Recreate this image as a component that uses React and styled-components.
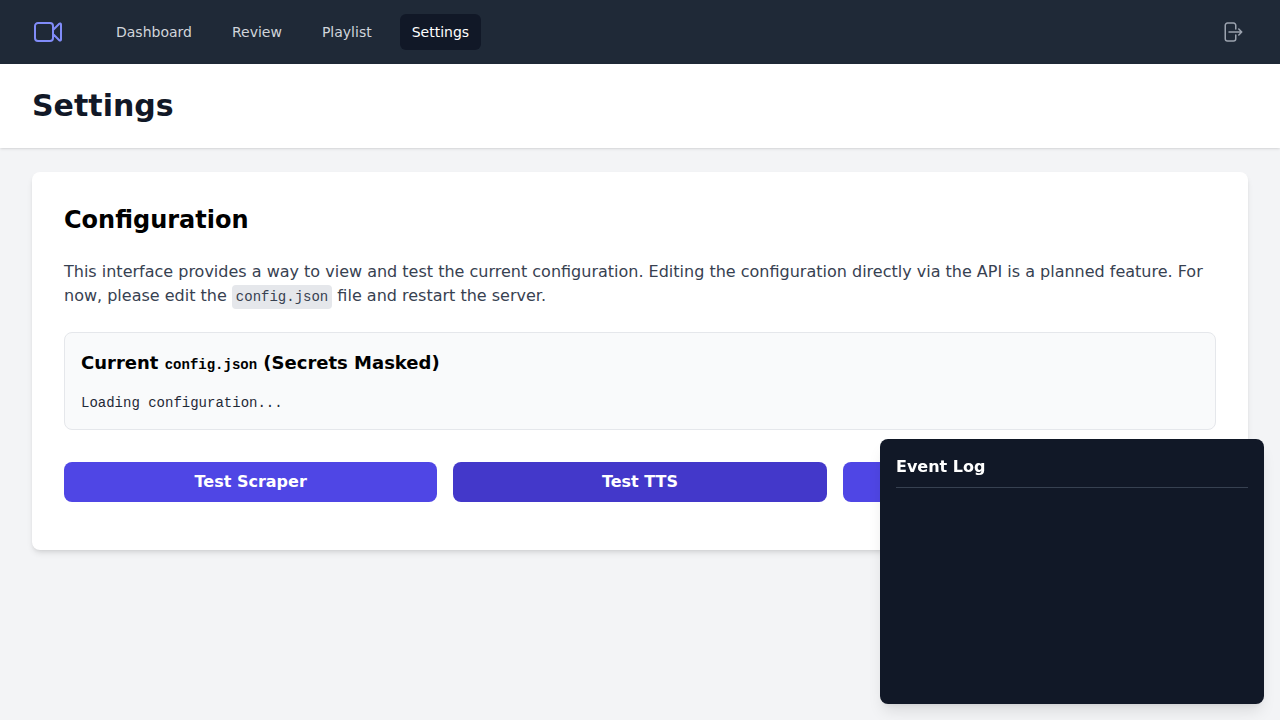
import React from "react";
import styled, { createGlobalStyle } from "styled-components";

const GlobalStyle = createGlobalStyle`
  *, *::before, *::after { box-sizing: border-box; }
  body {
    margin: 0;
    background: #f3f4f6;
    color: #000;
    font-family: "DejaVu Sans", sans-serif;
    font-size: 16px;
    line-height: 24px;
  }
  h1, h2, h3, p, pre { margin: 0; }
`;

const TopBar = styled.nav`
  display: flex;
  align-items: center;
  height: 64px;
  padding: 0 32px;
  background: #1f2937;
`;

const Logo = styled.svg`
  flex: none;
  width: 32px;
  height: 32px;
  color: #818cf8;
`;

const NavLinks = styled.div`
  display: flex;
  gap: 16px;
  margin-left: 40px;
`;

const NavLink = styled.a`
  padding: 8px 12px;
  border-radius: 6px;
  font-size: 14px;
  line-height: 20px;
  text-decoration: none;
  color: ${(p) => (p.$active ? "#fff" : "#d1d5db")};
  background: ${(p) => (p.$active ? "#111827" : "transparent")};
`;

const IconButton = styled.button`
  display: flex;
  margin-left: auto;
  padding: 4px;
  border: 0;
  border-radius: 16px;
  background: transparent;
  color: #9ca3af;
  cursor: pointer;

  svg {
    width: 24px;
    height: 24px;
  }
`;

const PageHeader = styled.header`
  padding: 24px 32px;
  background: #fff;
  box-shadow: 0 1px 3px rgba(0, 0, 0, 0.1), 0 1px 2px -1px rgba(0, 0, 0, 0.1);
`;

const PageTitle = styled.h1`
  font-size: 30px;
  line-height: 36px;
  font-weight: 700;
  color: #111827;
`;

const Main = styled.main`
  padding: 24px 32px;
`;

const Card = styled.section`
  padding: 32px 32px 48px;
  border-radius: 8px;
  background: #fff;
  box-shadow: 0 4px 6px -1px rgba(0, 0, 0, 0.1), 0 2px 4px -2px rgba(0, 0, 0, 0.1);
`;

const CardTitle = styled.h2`
  margin-bottom: 24px;
  font-size: 24px;
  line-height: 32px;
  font-weight: 700;
`;

const Description = styled.p`
  margin-bottom: 24px;
  color: #374151;
`;

const Code = styled.code`
  font-family: "Liberation Mono", monospace;
  font-size: 14px;
  line-height: 20px;
`;

const CodeTag = styled(Code)`
  padding: 4px;
  border-radius: 4px;
  background: #e5e7eb;
`;

const ConfigPanel = styled.div`
  padding: 16px;
  border: 1px solid #e5e7eb;
  border-radius: 8px;
  background: #f9fafb;
`;

const ConfigTitle = styled.h3`
  margin-bottom: 16px;
  font-size: 18px;
  line-height: 28px;
  font-weight: 600;
`;

const ConfigOutput = styled.pre`
  overflow-x: auto;
  font-family: "Liberation Mono", monospace;
  font-size: 14px;
  line-height: 20px;
  color: #1f2937;
`;

const Actions = styled.div`
  display: grid;
  grid-template-columns: repeat(3, 1fr);
  gap: 16px;
  margin-top: 32px;
`;

const ActionButton = styled.button`
  padding: 8px 16px;
  border: 0;
  border-radius: 8px;
  background: ${(p) => (p.$highlighted ? "#4338ca" : "#4f46e5")};
  color: #fff;
  font: inherit;
  font-weight: 700;
  cursor: pointer;
`;

const EventLog = styled.aside`
  position: fixed;
  right: 16px;
  bottom: 16px;
  width: 384px;
  padding: 16px;
  border-radius: 8px;
  background: #111827;
  color: #fff;
  box-shadow: 0 10px 15px -3px rgba(0, 0, 0, 0.1), 0 4px 6px -4px rgba(0, 0, 0, 0.1);
`;

const EventLogTitle = styled.h3`
  margin-bottom: 8px;
  padding-bottom: 8px;
  border-bottom: 1px solid #374151;
  font-size: 16px;
  font-weight: 700;
`;

const EventList = styled.div`
  height: 192px;
  overflow-y: auto;
`;

const links = ["Dashboard", "Review", "Playlist", "Settings"];
const tests = ["Test Scraper", "Test TTS", "Test Video"];

export default function App() {
  return (
    <>
      <GlobalStyle />
      <TopBar>
        <Logo viewBox="0 0 24 24" fill="none" stroke="currentColor" strokeWidth="1.5" strokeLinecap="round" strokeLinejoin="round" aria-hidden="true">
          <path d="M15.75 10.5l4.72-4.72a.75.75 0 011.28.53v11.38a.75.75 0 01-1.28.53l-4.72-4.72M4.5 18.75h9a2.25 2.25 0 002.25-2.25v-9a2.25 2.25 0 00-2.25-2.25h-9A2.25 2.25 0 002.25 7.5v9a2.25 2.25 0 002.25 2.25z" />
        </Logo>
        <NavLinks>
          {links.map((name) => (
            <NavLink
              key={name}
              href={`#${name.toLowerCase()}`}
              $active={name === "Settings"}
              aria-current={name === "Settings" ? "page" : undefined}
            >
              {name}
            </NavLink>
          ))}
        </NavLinks>
        <IconButton type="button" aria-label="Log out">
          <svg viewBox="0 0 24 24" fill="none" stroke="currentColor" strokeWidth="1.5" strokeLinecap="round" strokeLinejoin="round" aria-hidden="true">
            <path d="M15.75 9V5.25A2.25 2.25 0 0013.5 3h-6a2.25 2.25 0 00-2.25 2.25v13.5A2.25 2.25 0 007.5 21h6a2.25 2.25 0 002.25-2.25V15m3 0l3-3m0 0l-3-3m3 3H9" />
          </svg>
        </IconButton>
      </TopBar>

      <PageHeader>
        <PageTitle>Settings</PageTitle>
      </PageHeader>

      <Main>
        <Card>
          <CardTitle>Configuration</CardTitle>
          <Description>
            This interface provides a way to view and test the current configuration. Editing the
            configuration directly via the API is a planned feature. For now, please edit the{" "}
            <CodeTag>config.json</CodeTag> file and restart the server.
          </Description>
          <ConfigPanel>
            <ConfigTitle>
              Current <Code>config.json</Code> (Secrets Masked)
            </ConfigTitle>
            <ConfigOutput>Loading configuration...</ConfigOutput>
          </ConfigPanel>
          <Actions>
            {tests.map((name) => (
              <ActionButton key={name} type="button" $highlighted={name === "Test TTS"}>
                {name}
              </ActionButton>
            ))}
          </Actions>
        </Card>
      </Main>

      <EventLog>
        <EventLogTitle>Event Log</EventLogTitle>
        <EventList role="log" aria-label="Event log" />
      </EventLog>
    </>
  );
}
